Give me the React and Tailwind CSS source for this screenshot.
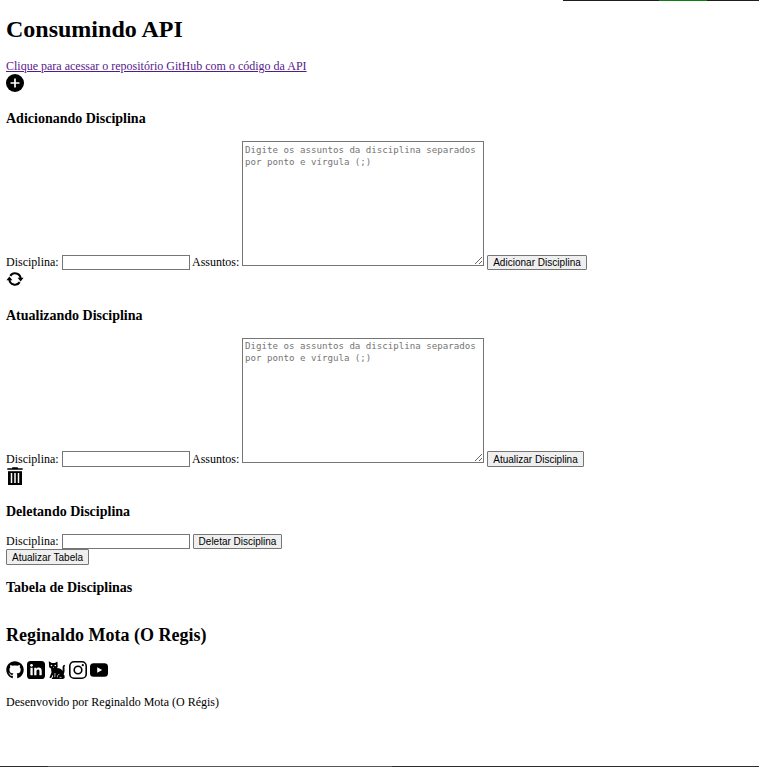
import React from "react";
import { FaGithub } from "react-icons/fa";

function AddIcon() {
  return (
    <svg className="block size-[18px]" viewBox="0 0 18 18">
      <circle cx="9" cy="9" r="9" />
      <path d="M9 4.5v9M4.5 9h9" stroke="#fff" strokeWidth="1.7" />
    </svg>
  );
}

function RefreshIcon() {
  return (
    <svg className="block size-[18px]" viewBox="0 0 18 18">
      <path d="M4.3 5.9A5.6 5.6 0 0 1 14.6 8.5M13.7 12.1A5.6 5.6 0 0 1 3.4 9.5" fill="none" stroke="#000" strokeWidth="2.1" />
      <path d="M.4 10.2 3.4 6.6l3 3.6zM17.6 7.8l-3 3.6-3-3.6z" />
    </svg>
  );
}

function TrashIcon() {
  return (
    <svg className="block size-[18px]" viewBox="0 0 18 18">
      <path d="M1.3 1.2h4.9V.2h5.6v1h4.9v1.5H1.3z" />
      <path d="M2 4.2h14V18H2z" />
      <path d="M5.5 6v10M9 6v10M12.5 6v10" stroke="#fff" strokeWidth="1.5" />
    </svg>
  );
}

function LinkedinIcon() {
  return (
    <svg className="block size-[18px]" viewBox="0 0 18 18">
      <rect width="18" height="18" rx="3.6" />
      <g fill="#fff">
        <circle cx="4.5" cy="4.3" r="1.4" />
        <path d="M3.4 6.7h2.3v7.6H3.4zM7.2 6.7h2.2v1.1c.5-.8 1.3-1.3 2.4-1.3 2.2 0 2.9 1.4 2.9 3.5v4.3h-2.3v-4c0-1.1-.3-1.9-1.3-1.9s-1.6.8-1.6 2v3.9H7.2z" />
      </g>
    </svg>
  );
}

function CatIcon() {
  return (
    <svg className="block size-[18px]" viewBox="0 0 18 18">
      <path d="M.8.2 3.8 2h3L9.4.4l.3 4.8c-.1 1-.4 1.5-1 1.9 2.9.1 4.9 1 5.8 2.9.3-1.2.1-2.2.1-3.5 0-1.4.6-2.3 1.7-2.8l.9 1c-1 .7-.8 1.7-.7 3 .2 2.3 0 4.1-.9 5.5.9.9 1.2 1.8 1.1 3.1-.2 1.1-.9 1.6-2 1.6H4.4c-.7 0-.9-.7-.4-1.1l1-.6-.1-2.7-1.4 3c-.4.7-1.6.6-2-.1l2-4.9L3 7.6C1.5 6.9.9 5.6 1 4z" />
      <g fill="#fff">
        <ellipse cx="3.5" cy="4.5" rx=".8" ry=".65" />
        <ellipse cx="7.3" cy="4.5" rx=".8" ry=".65" />
        <path d="m4.8 6.3.7.6.7-.6z" />
      </g>
      <path d="M7 12 6.8 16.2M9.4 16.3c-.2-1.7.6-2.9 2-2.9M11.5 16.4h2" fill="none" stroke="#fff" strokeWidth=".7" />
    </svg>
  );
}

function InstagramIcon() {
  return (
    <svg className="block size-[18px]" viewBox="0 0 18 18">
      <g fill="none" stroke="#000" strokeWidth="1.6">
        <rect x=".8" y=".8" width="16.4" height="16.4" rx="4.3" />
        <circle cx="9" cy="9" r="3.8" />
      </g>
      <circle cx="13.8" cy="4.2" r="1.1" />
    </svg>
  );
}

function YoutubeIcon() {
  return (
    <svg className="block size-[18px]" viewBox="0 0 18 18">
      <rect y="2.3" width="18" height="13.5" rx="3.6" />
      <path d="m7.2 6.3 5 2.7-5 2.7z" fill="#fff" />
    </svg>
  );
}

function Button({ className, children }) {
  return (
    <button className={`shrink-0 rounded-[1px] border border-[#767676] bg-[#efefef] text-center font-['Liberation_Sans',Arial,sans-serif] text-[10px] whitespace-nowrap text-black ${className}`}>
      {children}
    </button>
  );
}

function DisciplineField({ inputHeight }) {
  return (
    <label className="flex items-end">
      <span className="w-14 pb-px whitespace-nowrap">Disciplina:</span>
      <input className={`w-32 border border-[#767676] bg-white px-0.5 ${inputHeight}`} />
    </label>
  );
}

function SubjectForm({ inputHeight, textPadding, button }) {
  return (
    <form className="mt-[14px] flex h-[129px]">
      <div className="flex items-end">
        <DisciplineField inputHeight={inputHeight} />
        <span className="ml-[2px] w-[50px] pb-px whitespace-nowrap">Assuntos:</span>
      </div>
      <textarea
        className={`block h-[125px] w-[242px] resize border border-[#767676] bg-white px-[2px] font-['DejaVu_Sans_Mono',monospace] text-[9.13px] leading-[12px] placeholder:text-[#757575] ${textPadding}`}
        placeholder="Digite os assuntos da disciplina separados por ponto e vírgula (;)"
      />
      <div className="ml-[3px] flex items-end">{button}</div>
    </form>
  );
}

export default function App() {
  return (
    <div className="flex h-[767px] w-[759px] flex-col overflow-hidden bg-white font-['Liberation_Serif','Times_New_Roman',serif] text-[12px] leading-[14px] text-black">
      <div className="flex h-px shrink-0 justify-end">
        <div className="w-24 bg-[#1e1e1e]" />
        <div className="w-12 bg-[#107c10]" />
        <div className="w-[52px] bg-[#1e1e1e]" />
      </div>
      <main className="flex h-[765px] shrink-0 flex-col items-start pl-1.5">
        <h1 className="mt-[14px] text-[24px] leading-[28px] font-bold">Consumindo API</h1>
        <a href="#" className="mt-4 text-[#551a8b] underline">
          Clique para acessar o repositório GitHub com o código da API
        </a>
        <div className="mt-px"><AddIcon /></div>

        <h3 className="mt-[19px] text-[14px] leading-4 font-bold">Adicionando Disciplina</h3>
        <SubjectForm textPadding="py-[2px]" inputHeight="h-[15px]" button={<Button className="h-[15px] w-[100px] leading-[13px] tracking-[0.02px]">Adicionar Disciplina</Button>} />
        <RefreshIcon />

        <h3 className="mt-5 text-[14px] leading-4 font-bold">Atualizando Disciplina</h3>
        <SubjectForm textPadding="py-px" inputHeight="h-4" button={<Button className="h-4 w-[97px] pt-px leading-[13px]">Atualizar Disciplina</Button>} />
        <TrashIcon />

        <h3 className="mt-[19px] text-[14px] leading-4 font-bold">Deletando Disciplina</h3>
        <form className="mt-[14px] flex items-end gap-[3px]">
          <DisciplineField inputHeight="h-[15px]" />
          <Button className="h-[15px] w-[89px] leading-[13px]">Deletar Disciplina</Button>
        </form>
        <Button className="h-4 w-[83px] pt-px leading-[13px]">Atualizar Tabela</Button>

        <h3 className="mt-[15px] text-[14px] leading-4 font-bold">Tabela de Disciplinas</h3>
        <h2 className="mt-[29px] text-[18px] leading-5 font-bold">Reginaldo Mota (O Regis)</h2>
        <div className="mt-[16px] flex gap-[3px]">
          <a href="#" aria-label="GitHub"><FaGithub className="block size-[18px]" /></a>
          <a href="#" aria-label="LinkedIn"><LinkedinIcon /></a>
          <a href="#" aria-label="Cat"><CatIcon /></a>
          <a href="#" aria-label="Instagram"><InstagramIcon /></a>
          <a href="#" aria-label="YouTube"><YoutubeIcon /></a>
        </div>
        <p className="mt-4">Desenvovido por Reginaldo Mota (O Régis)</p>
      </main>
      <div className="flex h-px shrink-0">
        <div className="w-12 bg-[#2b2b2b]" />
        <div className="w-[344px] bg-[#555]" />
        <div className="flex-1 bg-[#2b2b2b]" />
      </div>
    </div>
  );
}
